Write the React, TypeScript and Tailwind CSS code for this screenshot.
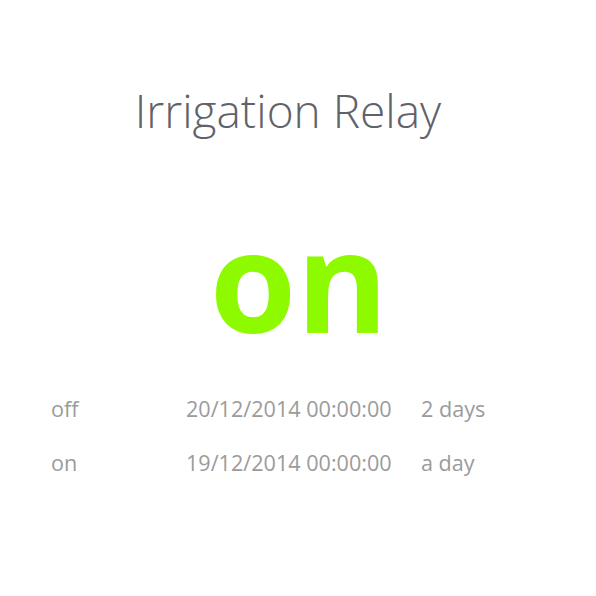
import React from "react";

export default function App() {
  const rows = [
    { state: "off", date: "20/12/2014 00:00:00", rel: "2 days" },
    { state: "on", date: "19/12/2014 00:00:00", rel: "a day" },
  ];
  return (
    <div className="w-[596px] h-[596px] bg-white" style={{ fontFamily: '"Open Sans", sans-serif' }}>
      <div className="pt-[78px] flex justify-center">
        <h1 className="text-[46px] font-light text-[#5f6269] leading-[64px] ml-[-20px]">Irrigation Relay</h1>
      </div>
      <div className="flex justify-center mt-[62px]">
        <div className="text-[140px] font-bold text-[#8efa00] leading-[150px] ml-[2px]">on</div>
      </div>
      <div className="mt-[40px] pl-[51px] flex flex-col gap-[24px]">
        {rows.map((r) => (
          <div key={r.date} className="flex text-[21.6px] text-[#9b9b9b] font-normal leading-[30px]">
            <div className="w-[135px]">{r.state}</div>
            <div className="w-[235px]">{r.date}</div>
            <div>{r.rel}</div>
          </div>
        ))}
      </div>
    </div>
  );
}
